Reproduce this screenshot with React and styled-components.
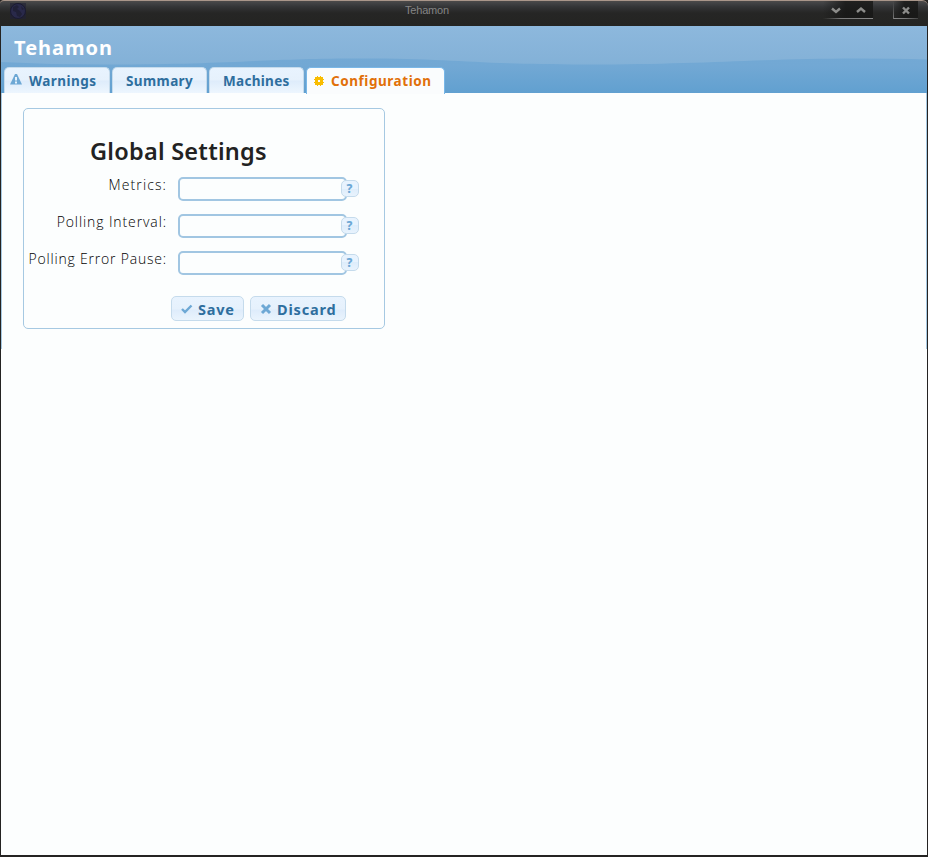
import React from "react";
import styled, { createGlobalStyle } from "styled-components";

const GlobalStyle = createGlobalStyle`
  * { box-sizing: border-box; }
  body { margin: 0; overflow: hidden; background: #242322; }
`;

const Window = styled.div`
  width: 928px;
  height: 857px;
  display: flex;
  flex-direction: column;
  background: #242322;
  font-family: "Noto Sans", "Open Sans", sans-serif;
  color: #222;
`;

const TitleBar = styled.header`
  height: 26px;
  flex: none;
  display: grid;
  grid-template-columns: 405px 1fr auto;
  border-top: 1px solid #a9968a;
  border-radius: 4px 6px 0 0;
  background: linear-gradient(#4c4a49 0, #424345 2px, #333436 6px, #262625 12px, #242422 100%);
`;

const Globe = styled.svg`
  width: 18px;
  height: 18px;
  margin: 1px 0 0 9px;
`;

const WindowTitle = styled.div`
  font: 11px/19px "Liberation Sans", Arial, sans-serif;
  color: #858585;
  letter-spacing: ${(p) => p.$spacing};
`;

const Controls = styled.div`
  display: flex;
  gap: 20px;
  height: 18px;
  padding-right: 10px;
`;

const ControlGroup = styled.div`
  display: flex;
  align-items: center;
  justify-content: flex-end;
  width: ${(p) => p.$width}px;
  background:
    linear-gradient(transparent, #777) left / ${(p) => (p.$edge ? "1px" : "0")} 100% no-repeat,
    linear-gradient(90deg, ${(p) => (p.$edge ? "#888, #777 50%, #444" : "transparent, #777 35%, #888")}) bottom / 100% 1px no-repeat,
    linear-gradient(90deg, transparent, rgba(22, 22, 21, 0.8) 45%);
`;

const ControlIcon = styled.svg`
  width: 25px;
  height: 16px;
  fill: none;
  stroke: #8c8c8a;
  stroke-width: 2.4;
`;

const Content = styled.main`
  height: 829px;
  margin: 0 1px;
  background: #fcfefe;
`;

const Banner = styled.section`
  height: 67px;
  display: flex;
  flex-direction: column;
  justify-content: space-between;
  position: relative;
  background: linear-gradient(#76aad5 0, #72a8d4 40px, #61a0d0 100%);
`;

const Wave = styled.svg`
  position: absolute;
  inset: 0;
  width: 926px;
  height: 67px;
`;

const Brand = styled.h1`
  position: relative;
  margin: 7px 0 0 13px;
  font-size: 20px;
  line-height: 30px;
  font-weight: 700;
  letter-spacing: 1px;
  color: #fff;
`;

const Tabs = styled.nav`
  position: relative;
  display: flex;
  gap: 2px;
  height: 26px;
  padding-left: 3px;
`;

const Tab = styled.button`
  display: flex;
  align-items: center;
  width: ${(p) => p.$width}px;
  height: ${(p) => (p.$active ? 27 : 26)}px;
  padding: 0 0 0 ${(p) => p.$pad}px;
  border: 1px solid ${(p) => (p.$active ? "#79b7e7" : "#c5dbec")};
  border-bottom: 0;
  border-radius: 5px 5px 0 0;
  background: ${(p) =>
    p.$active ? "#fafcfd" : "linear-gradient(#e8f3fe 0, #e6f1fc 12px, #deecfb 13px, #edf6fe 100%)"};
  color: ${(p) => (p.$active ? "#e17009" : "#2e6e9e")};
  font: 700 13.5px/26px "Noto Sans", sans-serif;
  letter-spacing: ${(p) => p.$spacing}px;
  white-space: nowrap;
`;

const TabIcon = styled.svg`
  flex: none;
  width: 12px;
  height: 12px;
  margin-right: ${(p) => p.$gap}px;
  margin-top: -1px;
`;

const Pane = styled.section`
  height: 256px;
  padding: 15px 0 0 21px;
  border: solid #a6c9e2;
  border-width: 0 1px;
`;

const Settings = styled.form`
  width: 362px;
  height: 221px;
  border: 1px solid #a6c9e2;
  border-radius: 5px;
  display: flex;
  flex-direction: column;
`;

const Heading = styled.h2`
  margin: 24px 0 0 66px;
  font-size: 23.5px;
  line-height: 36px;
  font-weight: 600;
  letter-spacing: 0.25px;
`;

const Fields = styled.div`
  display: flex;
  flex-direction: column;
  gap: 13px;
  margin-top: 8px;
`;

const Field = styled.div`
  height: 24px;
  display: grid;
  grid-template-columns: 143px 170px 18px;
  column-gap: 11px;
`;

const Label = styled.label`
  justify-self: end;
  margin-top: -1px;
  font-family: "Open Sans", "Noto Sans", sans-serif;
  font-weight: 300;
  font-size: 14px;
  line-height: 18px;
  letter-spacing: ${(p) => p.$spacing}px;
  color: #000;
  white-space: nowrap;
`;

const Input = styled.input`
  width: 169px;
  height: 24px;
  padding: 2px 6px;
  border: 2px solid #a1c6e2;
  border-radius: 5px;
  background: #fcfefe;
`;

const Help = styled.button`
  position: relative;
  width: 18px;
  height: 17px;
  margin: 3px 0 0 -18px;
  padding: 0 1px 0 0;
  border: 1px solid #c5dbec;
  border-radius: 5px;
  background: linear-gradient(#e8f3fe 0 50%, #deedfb 50%, #e8f3fd);
  color: #6da8d5;
  font: 800 12px/15px "Noto Sans", sans-serif;
`;

const Actions = styled.div`
  display: flex;
  gap: 6px;
  margin: 21px 0 0 147px;
`;

const Action = styled.button`
  display: flex;
  align-items: center;
  width: ${(p) => p.$width}px;
  height: 25px;
  padding: 1px 0 0 9px;
  border: 1px solid #c5dbec;
  border-radius: 5px;
  background: linear-gradient(#e8f3fe 0, #e6f1fc 12px, #deecfb 13px, #eaf4fd 100%);
  color: #2e6e9e;
  font: 700 14.5px/23px "Noto Sans", sans-serif;
  letter-spacing: ${(p) => p.$spacing}px;
  white-space: nowrap;
`;

const ActionIcon = styled.svg`
  flex: none;
  width: 12px;
  height: 12px;
  margin: -1px 5px 0 0;
  fill: none;
  stroke: #6da8d5;
`;

const fields = [
  { label: "Metrics:", spacing: 1.1 },
  { label: "Polling Interval:", spacing: 0.9 },
  { label: "Polling Error Pause:", spacing: 0.8 },
];

export default function App() {
  return (
    <Window>
      <GlobalStyle />
      <TitleBar>
        <Globe viewBox="0 0 18 18">
          <rect x="1" y="1" width="16" height="16" fill="#222137" opacity=".6" />
          <circle cx="9" cy="9" r="7.5" fill="#29294a" stroke="#1b1b30" />
          <path d="M4 5l4-2 2 2-2 2 3 2 2 3-2 3-3-1-1-4-3-1zM12 4l3 3-2 1z" fill="#202037" />
        </Globe>
        <WindowTitle $spacing="-0.2px">Tehamon</WindowTitle>
        <Controls>
          <ControlGroup $width={50}>
            <ControlIcon viewBox="0 0 25 16"><path d="M9 6.5l4 3.5 4-3.5" /></ControlIcon>
            <ControlIcon viewBox="0 0 25 16"><path d="M9 10l4-3.5 4 3.5" /></ControlIcon>
          </ControlGroup>
          <ControlGroup $width={25} $edge>
            <ControlIcon viewBox="0 0 25 16"><path d="M10 5.5l6 6M16 5.5l-6 6" /></ControlIcon>
          </ControlGroup>
        </Controls>
      </TitleBar>
      <Content>
        <Banner>
          <Wave viewBox="0 0 926 67">
            <defs>
              <linearGradient id="sky" x1="0" y1="0" x2="0" y2="1">
                <stop offset="0" stopColor="#8db8dd" />
                <stop offset="1" stopColor="#83b1d7" />
              </linearGradient>
            </defs>
            <path
              fill="url(#sky)"
              d="M0 0H926V33.5Q895 32.5 855 32.5C760 32.5 700 38.5 585 38.5S460 32.5 360 32.5S230 38.5 105 38.5Q50 38.5 0 36Z"
            />
          </Wave>
          <Brand>Tehamon</Brand>
          <Tabs>
            <Tab $width={106} $pad={5} $spacing={0.45}>
              <TabIcon viewBox="0 0 12 12" $gap={7}>
                <path d="M5 0h2l5 10.5H0z" fill="#6da8d5" />
                <path d="M5 3h2v3.5H5zM5 7.5h2v2H5z" fill="#e8f3fd" />
              </TabIcon>
              Warnings
            </Tab>
            <Tab $width={95} $pad={13} $spacing={0.4}>Summary</Tab>
            <Tab $width={95} $pad={13} $spacing={0.3}>Machines</Tab>
            <Tab $width={139} $pad={6} $spacing={0.55} $active>
              <TabIcon viewBox="0 0 12 12" $gap={6}>
                <path
                  fill="#f9bd01"
                  fillRule="evenodd"
                  shapeRendering="crispEdges"
                  d="M2 2h2v-1h1v1h2v-1h1v1h2v2h1v1h-1v2h1v1h-1v2h-2v1h-1v-1h-2v1h-1v-1h-2v-2h-1v-1h1v-2h-1v-1h1zM5 5v2h2v-2z"
                />
              </TabIcon>
              Configuration
            </Tab>
          </Tabs>
        </Banner>
        <Pane>
          <Settings>
            <Heading>Global Settings</Heading>
            <Fields>
              {fields.map((field) => (
                <Field key={field.label}>
                  <Label $spacing={field.spacing}>{field.label}</Label>
                  <Input aria-label={field.label} />
                  <Help type="button">?</Help>
                </Field>
              ))}
            </Fields>
            <Actions>
              <Action type="button" $width={73} $spacing={0.75}>
                <ActionIcon viewBox="0 0 12 12" strokeWidth="2.4"><path d="M1 6l3 3 6.5-6.5" /></ActionIcon>
                Save
              </Action>
              <Action type="button" $width={96} $spacing={0.8}>
                <ActionIcon viewBox="0 0 12 12" strokeWidth="3"><path d="M2 2l8 8M10 2l-8 8" /></ActionIcon>
                Discard
              </Action>
            </Actions>
          </Settings>
        </Pane>
      </Content>
    </Window>
  );
}
